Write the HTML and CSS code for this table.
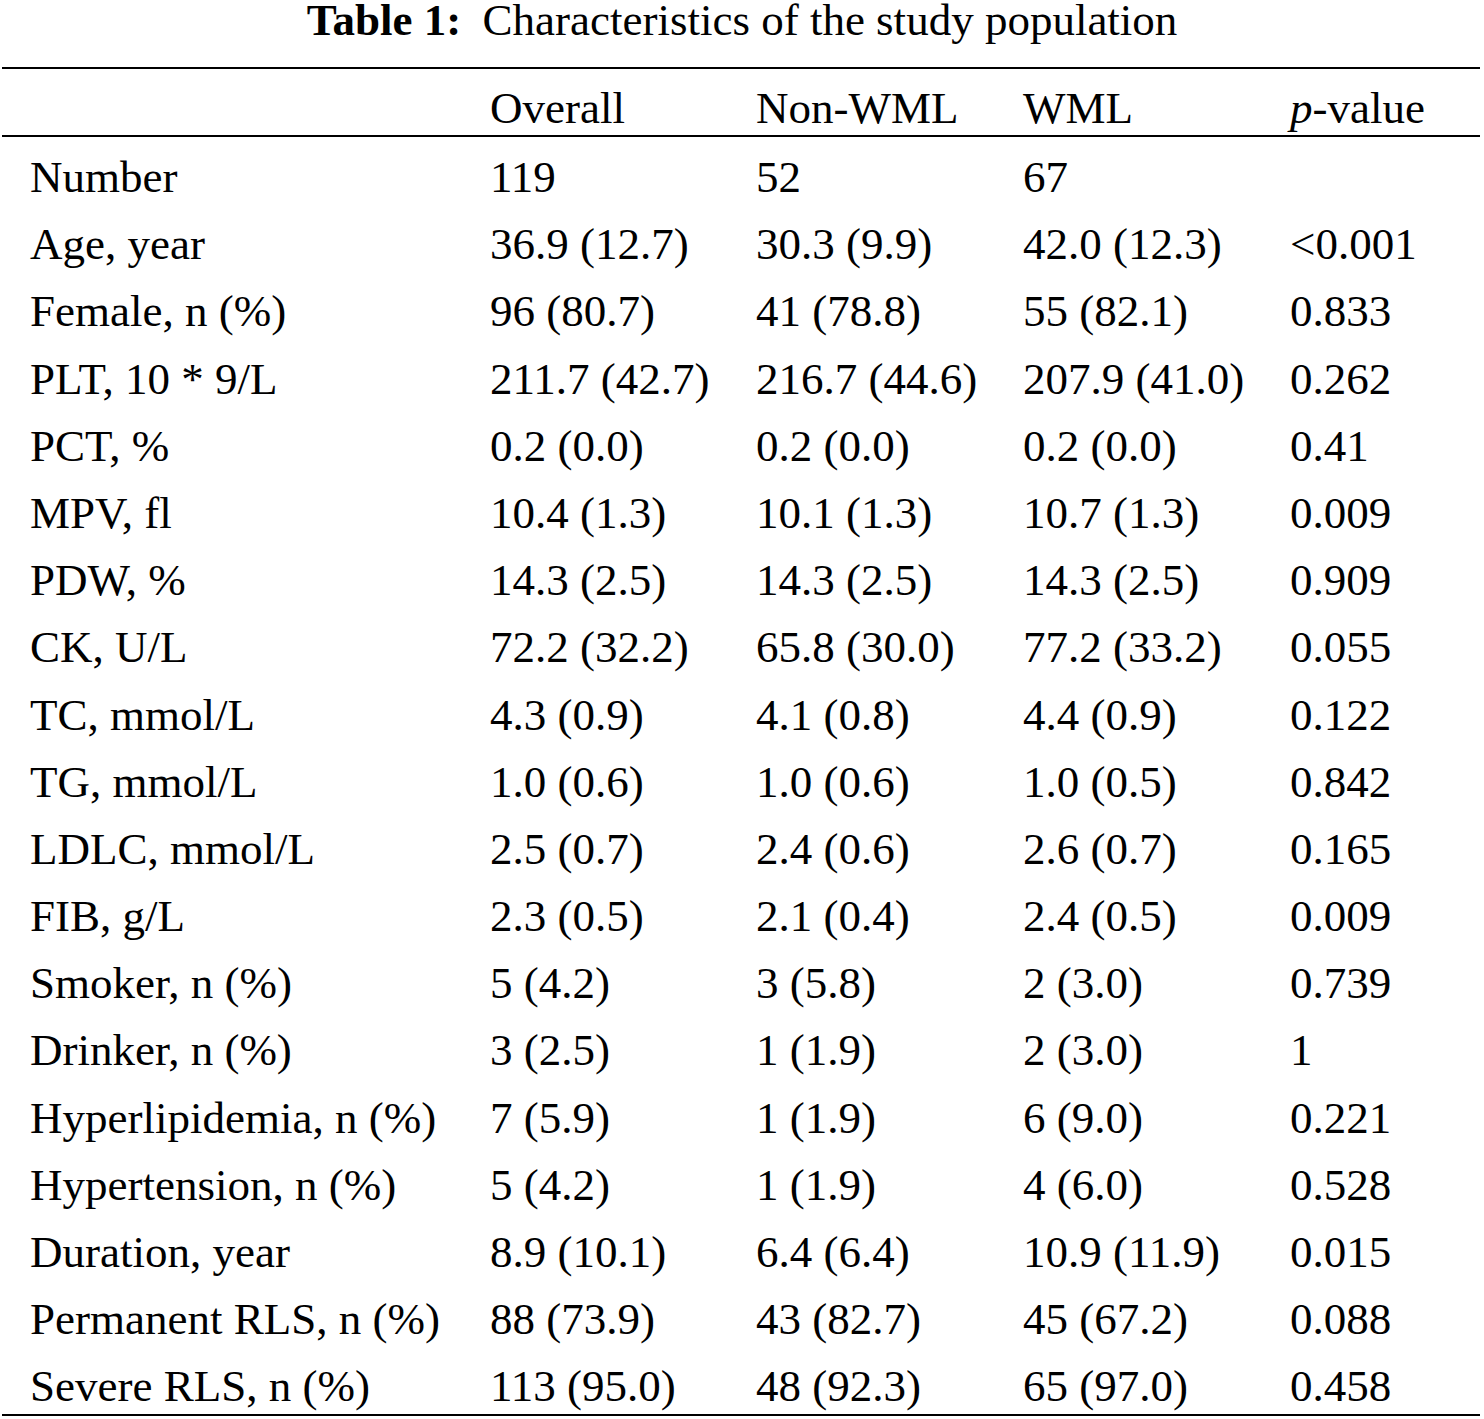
FILE: index.html
```html
<!DOCTYPE html>
<html lang="en">
<head>
<meta charset="utf-8">
<title>Table 1</title>
<link rel="stylesheet" href="styles.css">
</head>
<body>
<div class="page">
  <div class="caption"><span class="cap-label">Table 1:</span> Characteristics of the study population</div>
  <table class="tbl">
    <colgroup>
      <col class="c1"><col class="c2"><col class="c3"><col class="c4"><col class="c5">
    </colgroup>
    <thead>
      <tr><th></th><th>Overall</th><th>Non-WML</th><th>WML</th><th><i>p</i>-value</th></tr>
    </thead>
    <tbody>
      <tr><td>Number</td><td>119</td><td>52</td><td>67</td><td></td></tr>
      <tr><td>Age, year</td><td>36.9 (12.7)</td><td>30.3 (9.9)</td><td>42.0 (12.3)</td><td>&lt;0.001</td></tr>
      <tr><td>Female, n (%)</td><td>96 (80.7)</td><td>41 (78.8)</td><td>55 (82.1)</td><td>0.833</td></tr>
      <tr><td>PLT, 10 * 9/L</td><td>211.7 (42.7)</td><td>216.7 (44.6)</td><td>207.9 (41.0)</td><td>0.262</td></tr>
      <tr><td>PCT, %</td><td>0.2 (0.0)</td><td>0.2 (0.0)</td><td>0.2 (0.0)</td><td>0.41</td></tr>
      <tr><td>MPV, fl</td><td>10.4 (1.3)</td><td>10.1 (1.3)</td><td>10.7 (1.3)</td><td>0.009</td></tr>
      <tr><td>PDW, %</td><td>14.3 (2.5)</td><td>14.3 (2.5)</td><td>14.3 (2.5)</td><td>0.909</td></tr>
      <tr><td>CK, U/L</td><td>72.2 (32.2)</td><td>65.8 (30.0)</td><td>77.2 (33.2)</td><td>0.055</td></tr>
      <tr><td>TC, mmol/L</td><td>4.3 (0.9)</td><td>4.1 (0.8)</td><td>4.4 (0.9)</td><td>0.122</td></tr>
      <tr><td>TG, mmol/L</td><td>1.0 (0.6)</td><td>1.0 (0.6)</td><td>1.0 (0.5)</td><td>0.842</td></tr>
      <tr><td>LDLC, mmol/L</td><td>2.5 (0.7)</td><td>2.4 (0.6)</td><td>2.6 (0.7)</td><td>0.165</td></tr>
      <tr><td>FIB, g/L</td><td>2.3 (0.5)</td><td>2.1 (0.4)</td><td>2.4 (0.5)</td><td>0.009</td></tr>
      <tr><td>Smoker, n (%)</td><td>5 (4.2)</td><td>3 (5.8)</td><td>2 (3.0)</td><td>0.739</td></tr>
      <tr><td>Drinker, n (%)</td><td>3 (2.5)</td><td>1 (1.9)</td><td>2 (3.0)</td><td>1</td></tr>
      <tr><td>Hyperlipidemia, n (%)</td><td>7 (5.9)</td><td>1 (1.9)</td><td>6 (9.0)</td><td>0.221</td></tr>
      <tr><td>Hypertension, n (%)</td><td>5 (4.2)</td><td>1 (1.9)</td><td>4 (6.0)</td><td>0.528</td></tr>
      <tr><td>Duration, year</td><td>8.9 (10.1)</td><td>6.4 (6.4)</td><td>10.9 (11.9)</td><td>0.015</td></tr>
      <tr><td>Permanent RLS, n (%)</td><td>88 (73.9)</td><td>43 (82.7)</td><td>45 (67.2)</td><td>0.088</td></tr>
      <tr><td>Severe RLS, n (%)</td><td>113 (95.0)</td><td>48 (92.3)</td><td>65 (97.0)</td><td>0.458</td></tr>
    </tbody>
  </table>
</div>
</body>
</html>
```
FILE: styles.css
```css
html, body {
  margin: 0;
  padding: 0;
  background: #ffffff;
}

body {
  font-family: "Liberation Serif", "Times New Roman", serif;
  font-size: 45px;
  color: #000000;
}

.page {
  width: 1484px;
}

.caption {
  text-align: center;
  line-height: 40px;
  height: 40px;
  margin-bottom: 27px;
  white-space: nowrap;
}

.cap-label {
  font-weight: bold;
  margin-right: 10px;
}

.tbl {
  margin-left: 2px;
  width: 1478px;
  table-layout: fixed;
  border-collapse: collapse;
  border-top: 2px solid #000;
  border-bottom: 2px solid #000;
}

.c1 { width: 488px; }
.c2 { width: 266px; }
.c3 { width: 267px; }
.c4 { width: 267px; }
.c5 { width: 190px; }

.tbl th,
.tbl td {
  font-weight: normal;
  text-align: left;
  line-height: 50px;
  padding: 0;
  white-space: nowrap;
  vertical-align: top;
}

.tbl th {
  padding-top: 14px;
  padding-bottom: 2px;
  border-bottom: 2px solid #000;
}

.tbl td {
  padding-top: 15px;
  padding-bottom: 2.2px;
}

.tbl th:first-child,
.tbl td:first-child {
  padding-left: 28px;
}
```
